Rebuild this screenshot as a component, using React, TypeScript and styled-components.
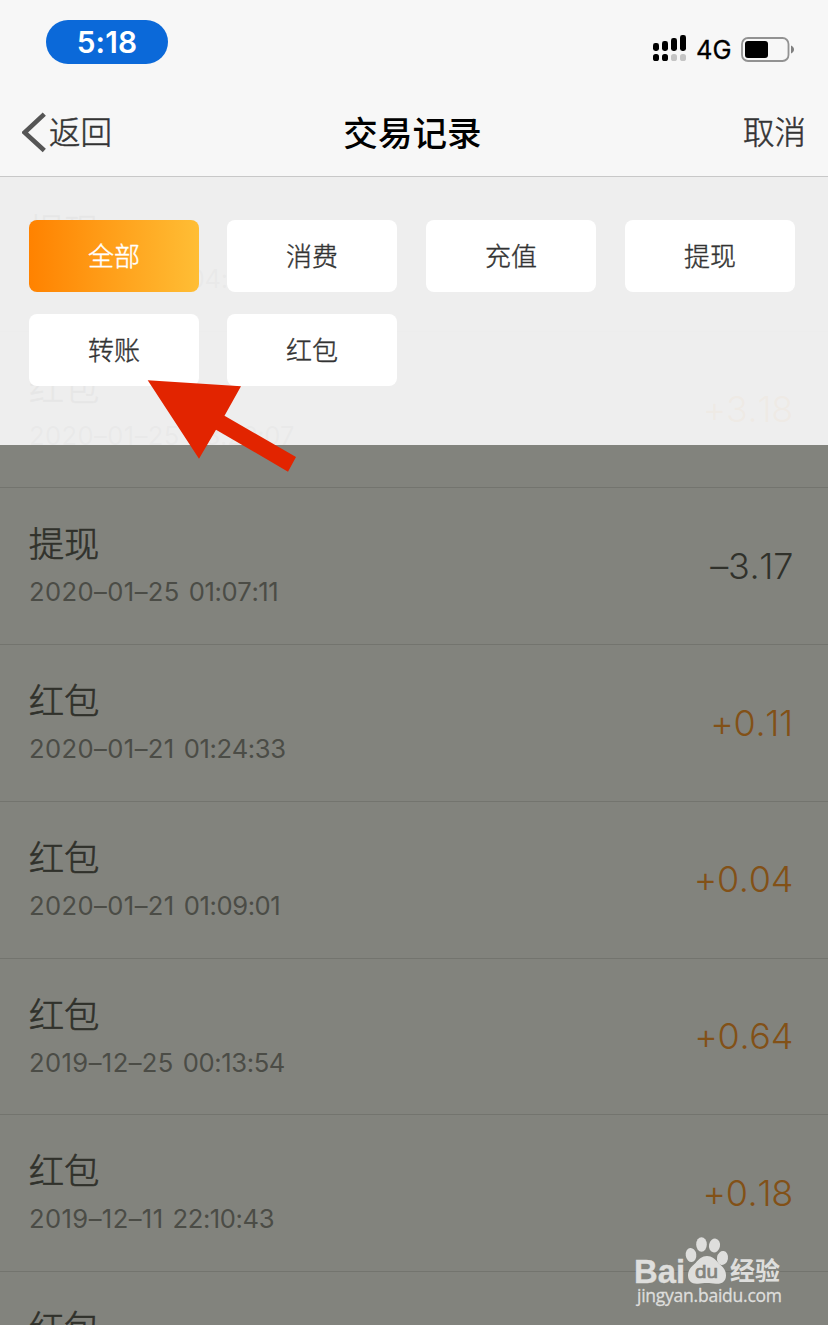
import React from 'react';
import styled, { createGlobalStyle } from 'styled-components';

const GlobalStyle = createGlobalStyle`
  * { box-sizing: border-box; }
  html, body { margin: 0; padding: 0; }
  body {
    font-family: Inter, "Noto Sans CJK SC", sans-serif;
    color: #333;
    overflow: hidden;
  }
`;

const Screen = styled.div`
  position: relative;
  width: 828px;
  height: 1325px;
  overflow: hidden;
  display: flex;
  flex-direction: column;
`;

const Header = styled.header`
  flex: none;
  height: 177px;
  background: #f7f7f7;
  border-bottom: 1px solid #c8c8c8;
`;

const StatusBar = styled.div`
  height: 88px;
  display: flex;
  justify-content: space-between;
  align-items: flex-start;
  padding: 20px 34px 0 46px;
`;

const TimePill = styled.div`
  width: 122px;
  height: 44px;
  border-radius: 22px;
  background: #0b69d9;
  color: #fff;
  font-size: 29.8px;
  font-weight: 600;
  line-height: 45px;
  text-align: center;
  letter-spacing: 0.2px;
`;

const StatusIcons = styled.div`
  display: flex;
  align-items: center;
  height: 28px;
  margin-top: 15px;
  color: #000;
`;

const Network = styled.span`
  width: 36px;
  margin: 2px 9px 0 9px;
  font-size: 25.5px;
  font-weight: 400;
  -webkit-text-stroke: 0.3px;
  line-height: 28px;
  letter-spacing: 0.1px;
  white-space: nowrap;
`;

const NavBar = styled.nav`
  height: 88px;
  display: grid;
  grid-template-columns: 1fr auto 1fr;
  align-items: center;
  padding: 1px 22px 0;
`;

const NavButton = styled.div<{ $end?: boolean }>`
  display: flex;
  align-items: center;
  justify-content: ${p => (p.$end ? 'flex-end' : 'flex-start')};
  font-size: 31.5px;
  font-weight: 300;
  -webkit-text-stroke: 0.5px;
  line-height: 40px;
  color: #333;
`;

const Title = styled.h1`
  margin: 1px 3px 0 0;
  font-size: 34.6px;
  font-weight: 500;
  line-height: 44px;
  color: #000;
`;

const Body = styled.main`
  position: relative;
  flex: 1;
  background: #fff;
  overflow: hidden;
`;

const List = styled.div`
  margin-top: -2.1px;
  font-feature-settings: "calt" 0;
  font-kerning: none;
`;

const Row = styled.div`
  height: 156.75px;
  padding: 0 35px 0 29px;
  display: flex;
  align-items: center;
  justify-content: space-between;
  border-bottom: 1px solid #d9d9d9;
`;

const Info = styled.div`
  display: flex;
  flex-direction: column;
  gap: 3px;
`;

const Kind = styled.div`
  margin-left: -0.3px;
  padding-top: 1px;
  font-size: 35.4px;
  font-weight: 300;
  -webkit-text-stroke: 0.6px;
  line-height: 48px;
  color: #333;
`;

const Time = styled.div`
  display: flex;
  gap: 9px;
  font-size: 25.6px;
  font-weight: 380;
  line-height: 40px;
  color: #777;
  white-space: nowrap;
`;

const Day = styled.span`
  letter-spacing: 0.4px;
`;

const Clock = styled.span`
  letter-spacing: -0.4px;
`;

const Amount = styled.div<{ $income: boolean }>`
  padding-bottom: 1px;
  font-size: 36px;
  font-weight: 350;
  letter-spacing: -0.3px;
  line-height: 44px;
  color: ${p => (p.$income ? '#ff8200' : '#333')};
`;

const Mask = styled.div`
  position: absolute;
  inset: 268px 0 0;
  background: rgba(47, 49, 38, 0.6);
`;

const FilterPanel = styled.section`
  position: absolute;
  inset: 0 0 auto;
  height: 268px;
  padding: 43px 33px 0 29px;
  background: rgba(237, 237, 237, 0.965);
  display: grid;
  grid-template-columns: 198px 199px 199px 170px;
  grid-auto-rows: 72px;
  row-gap: 22px;
`;

const Filter = styled.div<{ $active?: boolean }>`
  width: 170px;
  border-radius: 8px;
  background: ${p => (p.$active ? 'linear-gradient(90deg, #ff8200, #ffbe35)' : '#fff')};
  color: ${p => (p.$active ? '#fff' : '#333')};
  font-size: 26px;
  font-weight: 300;
  -webkit-text-stroke: 0.4px;
  line-height: 73px;
  text-align: center;
`;

const Pointer = styled.svg`
  position: absolute;
  left: 140px;
  top: 370px;
`;

const Watermark = styled.svg`
  position: absolute;
  left: 630px;
  top: 1232px;
`;

const filters = ['全部', '消费', '充值', '提现', '转账', '红包'];

const records = [
  { kind: '提现', day: '2020–01–25', clock: '04:14:32', amount: '–3.18' },
  { kind: '红包', day: '2020–01–25', clock: '03:22:07', amount: '+3.18' },
  { kind: '提现', day: '2020–01–25', clock: '01:07:11', amount: '–3.17' },
  { kind: '红包', day: '2020–01–21', clock: '01:24:33', amount: '+0.11' },
  { kind: '红包', day: '2020–01–21', clock: '01:09:01', amount: '+0.04' },
  { kind: '红包', day: '2019–12–25', clock: '00:13:54', amount: '+0.64' },
  { kind: '红包', day: '2019–12–11', clock: '22:10:43', amount: '+0.18' },
  { kind: '红包', day: '', clock: '', amount: '' },
];

const SignalIcon = () => (
  <svg width="34" height="28" viewBox="0 0 34 28">
    <rect x="0" y="8" width="6" height="8" rx="2.4" />
    <rect x="9" y="6" width="6" height="10" rx="2.4" />
    <rect x="18" y="3" width="6" height="13" rx="2.4" />
    <rect x="27" y="0" width="6" height="16" rx="2.4" />
    <rect x="0" y="19" width="6" height="7" rx="2.6" />
    <rect x="9" y="19" width="6" height="7" rx="2.6" />
    <rect x="18" y="19" width="6" height="7" rx="2.6" fill="#c4c4c4" />
    <rect x="27" y="19" width="6" height="7" rx="2.6" fill="#c4c4c4" />
  </svg>
);

const BatteryIcon = () => (
  <svg width="53" height="28" viewBox="0 0 53 28">
    <rect x="1" y="3" width="46.5" height="23" rx="6" fill="none" stroke="#929292" strokeWidth="1.8" />
    <rect x="4" y="6" width="23" height="17" rx="3" />
    <path d="M50 10.500c4 1.500 4 6.500 0 8z" fill="#808080" />
  </svg>
);

const BackIcon = () => (
  <svg width="27" height="42" viewBox="0 0 27 42">
    <path d="M22.300 2.100L2.600 20.500L22.300 38.500" fill="none" stroke="#555" strokeWidth="4.600" />
  </svg>
);

const App = () => (
  <>
    <GlobalStyle />
    <Screen>
      <Header>
        <StatusBar>
          <TimePill>5:18</TimePill>
          <StatusIcons>
            <SignalIcon />
            <Network>4G</Network>
            <BatteryIcon />
          </StatusIcons>
        </StatusBar>
        <NavBar>
          <NavButton>
            <BackIcon />
            返回
          </NavButton>
          <Title>交易记录</Title>
          <NavButton $end>取消</NavButton>
        </NavBar>
      </Header>
      <Body>
        <List>
          {records.map((r, i) => (
            <Row key={i}>
              <Info>
                <Kind>{r.kind}</Kind>
                <Time>
                  <Day>{r.day || '\u00a0'}</Day>
                  <Clock>{r.clock}</Clock>
                </Time>
              </Info>
              <Amount $income={r.amount.startsWith('+')}>{r.amount}</Amount>
            </Row>
          ))}
        </List>
        <Mask />
        <FilterPanel>
          {filters.map((name, i) => (
            <Filter key={name} $active={i === 0}>{name}</Filter>
          ))}
        </FilterPanel>
      </Body>
      <Pointer width="164" height="110" viewBox="140 370 164 110">
        <path d="M147.700 380.300L241 386.200L224.500 415.700L296 457L288 471.700L216 429.700L199 458.700Z" fill="#e22400" />
      </Pointer>
      <Watermark width="160" height="80" viewBox="630 1232 160 80" fill="#dededc">
        <text x="634" y="1282.500" fontFamily="Liberation Sans" fontWeight="700" fontSize="33.500" textLength="51" lengthAdjust="spacingAndGlyphs" stroke="#dededc" strokeWidth="0.400">Bai</text>
        <ellipse cx="691" cy="1255" rx="5.300" ry="7" transform="rotate(-8 691 1255)" />
        <ellipse cx="701.500" cy="1244.500" rx="5.300" ry="7.300" />
        <ellipse cx="714.500" cy="1245.500" rx="5.500" ry="7" transform="rotate(12 714.500 1245.500)" />
        <ellipse cx="722.500" cy="1258" rx="5.500" ry="7" transform="rotate(10 722.500 1258)" />
        <path d="M707 1256C712 1256 715 1259 718.500 1263C723 1267 726 1270 726 1275.500C726 1281.500 721.500 1284.300 716 1283.800C712 1283.300 710 1283 707 1283C703.500 1283 701 1283.300 698 1283.700C692 1284.300 688 1281 688 1275.500C688 1270 691 1267 695.500 1263C699 1259 702 1256 707 1256Z" />
        <text x="695" y="1278" fontFamily="Liberation Sans" fontWeight="400" fontSize="19" fill="#82837d" stroke="#82837d" strokeWidth="0.700" textLength="23" lengthAdjust="spacingAndGlyphs">du</text>
        <text x="730" y="1280" fontFamily="Noto Sans CJK SC" fontWeight="700" fontSize="25" textLength="50" lengthAdjust="spacingAndGlyphs">经验</text>
        <text x="637" y="1302" fontFamily="Open Sans" fontWeight="500" fontSize="17.500" textLength="145" lengthAdjust="spacing" stroke="#dededc" strokeWidth="0.300">jingyan.baidu.com</text>
      </Watermark>
    </Screen>
  </>
);

export default App;
